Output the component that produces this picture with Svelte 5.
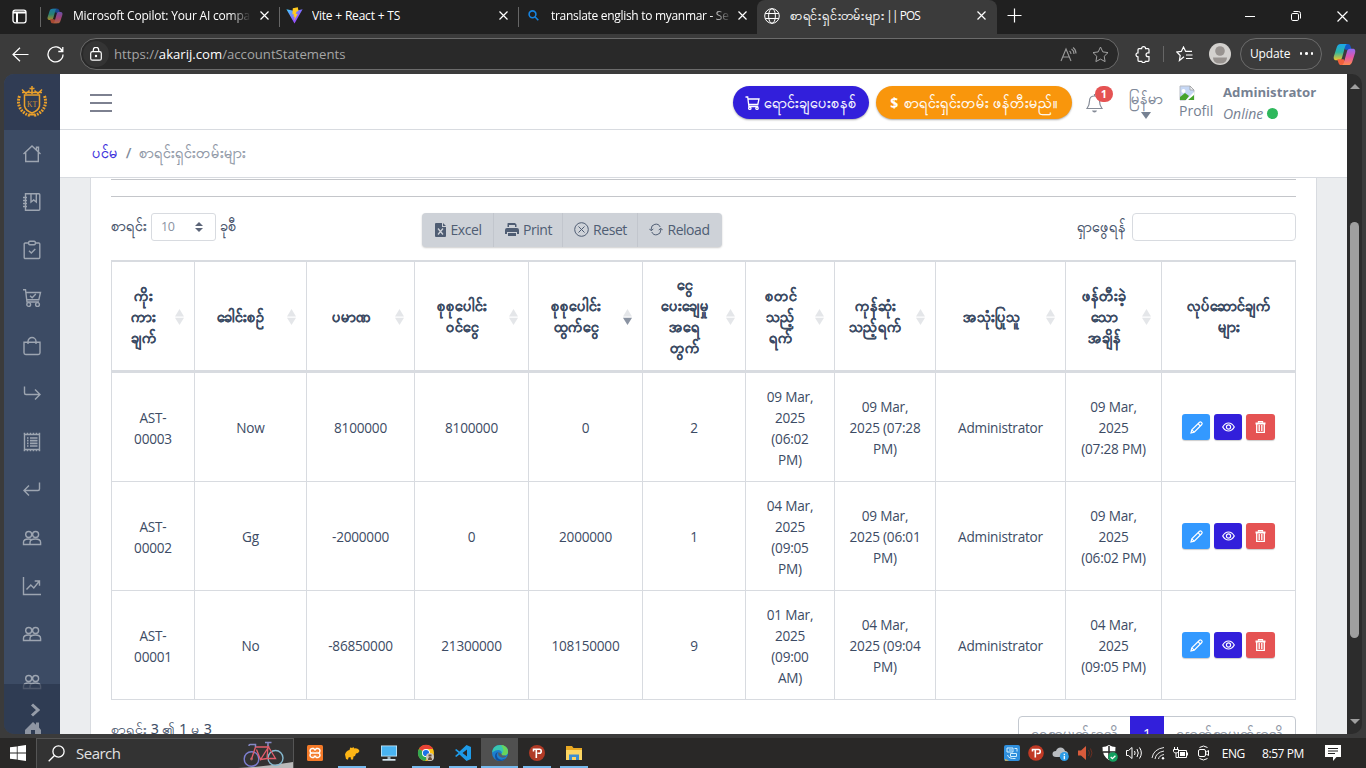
<script>
  const tabs = [
    { title: 'Microsoft Copilot: Your AI compa', icon: 'copilot', fade: true, w: 239 },
    { title: 'Vite + React + TS', icon: 'vite', w: 239 },
    { title: 'translate english to myanmar - Se', icon: 'search', fade: true, w: 238 },
    { title: 'စာရင်းရှင်းတမ်းများ', suffix: ' || POS', icon: 'globe', active: true, w: 240 }
  ];
  const nav = ['home', 'book', 'clip', 'cart', 'bag', 'right', 'list', 'left', 'people', 'chart', 'people', 'people'];
  const heads = [
    ['ကိုး', 'ကား', 'ချက်'],
    ['ခေါင်းစဉ်'],
    ['ပမာဏ'],
    ['စုစုပေါင်း', 'ဝင်ငွေ'],
    ['စုစုပေါင်း', 'ထွက်ငွေ'],
    ['ငွေ', 'ပေးချေမှု', 'အရေ', 'တွက်'],
    ['စတင်', 'သည့်', 'ရက်'],
    ['ကုန်ဆုံး', 'သည့်ရက်'],
    ['အသုံးပြုသူ'],
    ['ဖန်တီးခဲ့', 'သော', 'အချိန်'],
    ['လုပ်ဆောင်ချက်', 'များ']
  ];
  const rows = [
    [['AST-', '00003'], ['Now'], ['8100000'], ['8100000'], ['0'], ['2'], ['09 Mar,', '2025', '(06:02', 'PM)'], ['09 Mar,', '2025 (07:28', 'PM)'], ['Administrator'], ['09 Mar,', '2025', '(07:28 PM)']],
    [['AST-', '00002'], ['Gg'], ['-2000000'], ['0'], ['2000000'], ['1'], ['04 Mar,', '2025', '(09:05', 'PM)'], ['09 Mar,', '2025 (06:01', 'PM)'], ['Administrator'], ['09 Mar,', '2025', '(06:02 PM)']],
    [['AST-', '00001'], ['No'], ['-86850000'], ['21300000'], ['108150000'], ['9'], ['01 Mar,', '2025', '(09:00', 'AM)'], ['04 Mar,', '2025 (09:04', 'PM)'], ['Administrator'], ['04 Mar,', '2025', '(09:05 PM)']]
  ];
  const apps = ['xampp', 'heidi', 'pc', 'chrome', 'code', 'edge', 'pos', 'files'];
</script>

{#snippet copilot(size)}
  <svg width={size} height={size} viewBox="0 0 24 24">
    <defs>
      <linearGradient id="ca" x1="0" y1="0" x2="0" y2="1"><stop offset="0" stop-color="#1aa7ee" /><stop offset=".5" stop-color="#2fb6a0" /><stop offset="1" stop-color="#f3c62b" /></linearGradient>
      <linearGradient id="cb" x1="0" y1="0" x2="0" y2="1"><stop offset="0" stop-color="#8f6bf2" /><stop offset=".5" stop-color="#e255a8" /><stop offset="1" stop-color="#ff8a4c" /></linearGradient>
    </defs>
    <path fill="#1458c8" d="M9 1h6.500c1.600 0 2.300.9 2.800 2.400L19.500 7H13z" />
    <path fill="url(#ca)" d="M8 1h7c-1.300.3-2 1.500-2.500 3.200L9.500 15c-.6 2-1.500 3-3.500 3H3.500C.8 18 .3 15.800 1 13.500L4 4.200C4.700 2 6 1 8 1z" />
    <path fill="#f0603c" d="M15 23H8.500c-1.600 0-2.300-.9-2.800-2.400L4.500 17H11z" />
    <path fill="url(#cb)" d="M16 23H9c1.300-.3 2-1.500 2.500-3.200L14.500 9c.6-2 1.500-3 3.500-3h2.500c2.700 0 3.200 2.200 2.500 4.500l-3 9.300c-.7 2.200-2 3.200-4 3.200z" />
  </svg>
{/snippet}

{#snippet icon(name)}
  <svg class="ic" width="20" height="20" viewBox="0 0 20 20" fill="none" stroke="currentColor" stroke-width="1.400">
    {#if name === 'home'}
      <path d="M1.500 10 10 2l8.500 8M3.700 8.500v9h12.600v-9M14.500 6V3.200h2V8" />
    {:else if name === 'book'}
      <path d="M3.500 1.700h13.300q1 0 1 1v14.600q0 1-1 1H3.500zM1 5.500h4M1 8.500h4M1 11.500h4M1 14.500h4M9 2v8l2.700-2 2.600 2V2" />
    {:else if name === 'clip'}
      <rect x="2.200" y="3" width="15.600" height="15.500" rx="1" /><rect x="6.700" y="1.300" width="6.600" height="3.400" rx="1" fill="#3c4b64" /><path d="m7 10.700 2.300 2.300 4-4" />
    {:else if name === 'cart'}
      <path d="M1 1.700h2.500L5 14h12M4 4.500h14.500l-1.700 7.300H5M8 7.700l2.200 2 3.600-3.600" /><circle cx="6.700" cy="16.500" r="1.900" /><circle cx="15.500" cy="16.500" r="1.900" />
    {:else if name === 'bag'}
      <path d="M2 6.200h16v10.600q0 1.700-1.700 1.700H3.700Q2 18.500 2 16.800zM6 8V5.500a4 4 0 0 1 8 0V8" />
    {:else if name === 'right'}
      <path d="M2.500 2.500V9q0 1.500 1.500 1.500h14M13 5.500l5 5-5 5" />
    {:else if name === 'left'}
      <path d="M17.500 2.500V9q0 1.500-1.500 1.500H2M7 5.500l-5 5 5 5" />
    {:else if name === 'list'}
      <path d="M2.500 2.500h15v15h-15z" /><path stroke-dasharray="1.500 1.500" d="M1.700 1.500h16.600M1.700 18.500h16.600" /><path d="M5 6h1.500M8 6h7.500M5 8.700h1.500M8 8.700h7.500M5 11.400h1.500M8 11.400h7.500M5 14h1.500M8 14h7.500" stroke-width="1.700" />
    {:else if name === 'people'}
      <circle cx="6.700" cy="6.500" r="3" /><circle cx="13.600" cy="6.500" r="3" /><path d="M9.700 16.500H1.500v-2.200q0-3.300 5-3.300 2 0 3.200.6M8 16.500v-2q0-3.500 5.300-3.500t5.300 3.500v2z" />
    {:else if name === 'chart'}
      <path d="M1.500 1v17.500H19M4.500 13.500l4.300-4.600 3 3L17 5.500M12.700 5h4.800v4.800" />
    {/if}
  </svg>
{/snippet}

<div class="screen">
  <div class="tabs">
    <div class="workspace">
      <svg width="15" height="15" viewBox="0 0 15 15" fill="none" stroke="#fff" stroke-width="1.300"><rect x="1" y="1.200" width="13" height="12.600" rx="2.200" /><path d="M1 3.400h13M5 4v9.500" stroke-width="2" /></svg>
      <i class="sep"></i>
    </div>
    {#each tabs as t, i}
      <div class="tab {t.icon}" class:active={t.active} style="width:{t.w}px">
        <span class="fav">
          {#if t.icon === 'copilot'}<span class="dim">{@render copilot(16)}</span>
          {:else if t.icon === 'vite'}
            <svg width="17" height="17" viewBox="0 0 17 17"><defs><linearGradient id="vt" x1="0" y1="0" x2="1" y2="1"><stop offset="0" stop-color="#41d1ff" /><stop offset=".6" stop-color="#8b5cff" /><stop offset="1" stop-color="#bd34fe" /></linearGradient></defs><path d="M.4 2.300 8.500 16.500 16.600 2.300 8.800 4z" fill="url(#vt)" /><path d="m11.800.3-5 1-.4 6.200 1.600-.3-.6 2.800 1.400-.4-.7 4 3.700-6.800-2 .3.800-2.700 1.900-.3z" fill="#ffc91f" /></svg>
          {:else if t.icon === 'search'}
            <svg width="11" height="11" viewBox="0 0 11 11" fill="none" stroke="#1683e0" stroke-width="1.600"><circle cx="4.500" cy="4.300" r="3.400" /><path d="m7 6.800 3.300 3.400" /></svg>
          {:else}
            <svg width="16" height="16" viewBox="0 0 16 16" fill="none" stroke="#fff"><circle cx="8" cy="8" r="7.300" /><ellipse cx="8" cy="8" rx="3.400" ry="7.300" /><path d="M1.200 5.500h13.600M1.200 10.500h13.600" /></svg>
          {/if}
        </span>
        <span class="title" class:fade={t.fade}>{t.title}{#if t.suffix}<span class="suffix">{t.suffix}</span>{/if}</span>
        <svg class="x" width="9" height="9" viewBox="0 0 9 9" stroke="#fff" stroke-width="1.200"><path d="m.5.5 8 8m0-8-8 8" /></svg>
        {#if i < 2}<i class="sep"></i>{/if}
      </div>
    {/each}
    <svg class="plus" width="15" height="15" viewBox="0 0 15 15" stroke="#fff" stroke-width="1.200"><path d="M7.500.5v14M.5 7.500h14" /></svg>
    <div class="win">
      <svg width="10" height="10" viewBox="0 0 10 10" stroke="#fff"><path d="M0 5.500h10" /></svg>
      <svg width="10" height="10" viewBox="0 0 10 10" fill="none" stroke="#fff"><rect x=".5" y="2.500" width="7" height="7" rx="1.300" /><path d="M2.500.5h5q2 0 2 2v5" /></svg>
      <svg width="11" height="11" viewBox="0 0 11 11" stroke="#fff" stroke-width="1.200"><path d="m.5.5 10 10m0-10-10 10" /></svg>
    </div>
  </div>

  <div class="toolbar">
    <svg class="back" width="17" height="15" viewBox="0 0 17 15" fill="none" stroke="#fff" stroke-width="1.200"><path d="M16.500 7.500H1M8 .7 1 7.500l7 6.800" /></svg>
    <svg class="reload" width="17" height="17" viewBox="0 0 17 17" fill="none" stroke="#fff" stroke-width="1.300"><path d="M15.300 5.200A7.500 7.500 0 1 0 16 8.500M15.800 1v4.500h-4.500" /></svg>
    <div class="address">
      <span class="lock"><svg width="12" height="14" viewBox="0 0 12 14" fill="none" stroke="#fff" stroke-width="1.200"><rect x=".7" y="4.700" width="10.600" height="8.500" rx="1.800" /><path d="M3.300 4.500V3a2.700 2.700 0 0 1 5.400 0v1.500" /><circle cx="6" cy="9" r=".6" fill="#fff" /></svg></span>
      <span class="url">https://<b>akarij.com</b>/accountStatements</span>
      <svg class="aloud" width="17" height="15" viewBox="0 0 17 15" fill="none" stroke="#9a9a9a" stroke-width="1.100"><path d="M1 14 6 2l5 12M2.700 10h6.500M9.500 4q1.500 1 1.500 3M11.500 2q2.500 1.600 2.500 5M13 .5q3 2 3 6" /></svg>
      <svg width="17" height="17" viewBox="0 0 17 17" fill="none" stroke="#a2a2a2" stroke-linejoin="round"><path d="m8.500 1 2.300 4.900 5.200.7-3.800 3.700.9 5.300-4.600-2.500-4.600 2.500.9-5.300L1 6.600l5.200-.7z" /></svg>
    </div>
    <svg class="puz" width="16" height="17" viewBox="0 0 16 17" fill="none" stroke="#fff" stroke-width="1.200"><path d="M4 2.700h2.600a2 2 0 0 1 4 0H13q1 0 1 1v3.100h-1a1.900 1.900 0 0 0 0 3.900h1v3.600q0 1-1 1h-2.700a1.800 1.800 0 0 1-3.500 0H4q-1 0-1-1v-3.500a2 2 0 0 1 0-4V3.700q0-1 1-1z" /></svg>
    <i class="tsep"></i>
    <svg class="favs" width="17" height="16" viewBox="0 0 17 16" fill="none" stroke="#fff" stroke-width="1.200"><path d="M8 10.800 3.400 14.500l.8-5L.8 6l4.500-.6L7.500 1l2.200 4.400H16M10 9h6.500M10 12.500h6.500" /></svg>
    <svg class="ava" width="22" height="22" viewBox="0 0 22 22"><circle cx="11" cy="11" r="11" fill="#d3d1ce" /><circle cx="11" cy="8" r="4.800" fill="#989390" /><path d="M4 14.500h14q0 6-7 6t-7-6z" fill="#989390" /></svg>
    <div class="update">Update <span class="dots"><i></i><i></i><i></i></span></div>
    <span class="cop">{@render copilot(23)}</span>
  </div>

  <div class="frame">
    <aside>
      <div class="brand">
        <svg width="30" height="33" viewBox="0 0 30 33" fill="none" stroke="#e9a02b">
          <path d="M7.500 10h15v11q-1 4.500-7.500 7-6.500-2.500-7.500-7z" stroke-width="1.500" />
          <path d="M5 7.500h20M5 4.500l4 4 3.500-3M25 4.500l-4 4-3.500-3M15 1v8M12.500 3.500h5" stroke-width="1.500" />
          <path d="M2.500 11C-.5 19 3 28 14 31M27.500 11c3 8-.5 17-11.500 20" stroke-width="3" stroke-dasharray="1.800 1.100" />
          <path d="M12 29.500h6" stroke-width="2" />
          <text x="15" y="21.500" text-anchor="middle" fill="#d09235" stroke="none">KT</text>
        </svg>
      </div>
      <nav>{#each nav as n}<span>{@render icon(n)}</span>{/each}</nav>
      <div class="minimizer">
        <svg width="12" height="14" viewBox="0 0 12 14" fill="none" stroke="#959ca8" stroke-width="3"><path d="m2 1.500 6 5.500-6 5.500" /></svg>
        <svg class="hs" width="18" height="13" viewBox="0 0 18 13" fill="#8e95a2"><path d="M1 9 9 1l3 2.800V1.500h3v5L17 9v4h-6V9H7v4H1z" /></svg>
      </div>
    </aside>

    <main>
      <header>
        <div class="burger"><i></i><i></i><i></i></div>
        <div class="pill blue">
          <svg width="15" height="14" viewBox="0 0 15 14" fill="none" stroke="#fff" stroke-width="1.300"><path d="M.5 1h2.200l1.200 9.500h9.300M3.200 3h10.800l-1.200 5.500H3.700" /><circle cx="4.800" cy="12.200" r="1.200" /><circle cx="12" cy="12.200" r="1.200" /></svg>
          <span class="mm">ရောင်းချပေးစနစ်</span>
        </div>
        <div class="pill orange"><b>$</b><span class="mm">စာရင်းရှင်းတမ်း ဖန်တီးမည်။</span></div>
        <div class="bell">
          <svg width="17" height="20" viewBox="0 0 17 20" fill="none" stroke="#858b97" stroke-width="1.200"><path d="M1 15.500h15q-2.500-3.500-2.500-7.500 0-5-5-5t-5 5q0 4-2.500 7.500zM8.500 3V1" /><path d="M6 17.500h5q-.5 2-2.500 2t-2.500-2z" fill="#858b97" stroke="none" /></svg>
          <em>1</em>
        </div>
        <div class="lang"><span class="mm">မြန်မာ</span><i></i></div>
        <div class="photo">
          <svg width="16" height="16" viewBox="0 0 16 16"><path d="M1 1h10l4 4v10H1z" fill="#c5d7f5" stroke="#b8bcc4" /><path d="M11 1v4h4z" fill="#eef0f4" stroke="#999" stroke-width=".7" /><path d="M1 15v-3l5-4 4 3-3 4z" fill="#45a42c" /><path d="m6 16 9.500-9.500V16z" fill="#fff" /><path d="M9 15h6v-5z" fill="#45a42c" /><circle cx="4.500" cy="6" r="2" fill="#fff" /></svg>
          <span>Profil</span>
        </div>
        <div class="who"><strong>Administrator</strong><span>Online <i></i></span></div>
      </header>
      <div class="crumb mm"><a>ပင်မ</a><span>/</span><span class="cur">စာရင်းရှင်းတမ်းများ</span></div>
      <section>
        <div class="card">
          <hr /><hr class="second" />
          <div class="controls">
            <div class="len"><span class="lab1 mm">စာရင်း</span>
              <span class="select">10<svg width="8" height="10" viewBox="0 0 8 10" fill="#5c6578"><path d="M0 4h8L4 0zM0 6h8l-4 4z" /></svg></span>
              <span class="lab2 mm">ခုစီ</span></div>
            <div class="group">
              <span style="width:72px"><svg width="12" height="14" viewBox="0 0 12 14"><path d="M1 0h6v4h4v9q0 1-1 1H1q-1 0-1-1V1q0-1 1-1zM8 0l3 3H8z" fill="#4f5d73" /><path d="m3 5.500 5 6m0-6-5 6" stroke="#ced2d8" stroke-width="1.300" /></svg>Excel</span>
              <span style="width:69px"><svg width="14" height="13" viewBox="0 0 14 13" fill="#4f5d73"><path d="M3 0h7l1.500 1.500V4H10V2H4v2H2.500V.5zM2 5h10q2 0 2 2v4h-2V9H2v2H0V7q0-2 2-2zM3 10h8v3H3z" /></svg>Print</span>
              <span style="width:75px"><svg width="15" height="15" viewBox="0 0 15 15" fill="none" stroke="#4f5d73"><circle cx="7.500" cy="7.500" r="6.800" /><path d="m4.500 4.500 6 6m0-6-6 6" /></svg>Reset</span>
              <span style="width:84px"><svg width="14" height="13" viewBox="0 0 14 13" fill="none" stroke="#4f5d73"><path d="M2.200 7.500V6a4.700 4.700 0 0 1 9-2M11.800 5.500V7a4.700 4.700 0 0 1-9 2M.3 5.800l2 2 2-2M13.700 7.200l-2-2-2 2" /></svg>Reload</span>
            </div>
            <div class="find"><span class="mm">ရှာဖွေရန်</span><i></i></div>
          </div>
          <div class="table">
            <div class="row head">
              {#each heads as h, i}
                <div class="th" class:last={i === 10}>
                  <div>{#each h as l}<p>{l}</p>{/each}</div>
                  {#if i < 10}<svg class="sort" class:desc={i === 4} width="9" height="16" viewBox="0 0 9 16"><path d="M0 7.500h9L4.500 0z" /><path class="dn" d="M0 8.700h9L4.500 16z" /></svg>{/if}
                </div>
              {/each}
            </div>
            {#each rows as r}
              <div class="row">
                {#each r as c}<div class="td"><div>{#each c as l}<p>{l}</p>{/each}</div></div>{/each}
                <div class="td acts">
                  <span class="edit"><svg width="13" height="13" viewBox="0 0 13 13" fill="none" stroke="#fff" stroke-width="1.200"><path d="m1 12 .8-3.200L9.500 1.200q.9-.7 1.700 0l.6.600q.7.800 0 1.700L4.200 11.200zM8 2.700l2.300 2.300M1.800 8.800l2.400 2.400" /></svg></span>
                  <span class="view"><svg width="13" height="10" viewBox="0 0 13 10" fill="none" stroke="#fff" stroke-width="1.200"><path d="M.7 5q2.300-4 5.800-4t5.800 4q-2.300 4-5.800 4T.7 5z" /><circle cx="6.500" cy="5" r="2.100" /></svg></span>
                  <span class="del"><svg width="11" height="12" viewBox="0 0 11 12" fill="none" stroke="#fff" stroke-width="1.300"><path d="M3.500 1.800V.7h4v1.100M1.700 3v8.300h7.600V3M4.200 4v6M6.800 4v6" /><path d="M.5 2.500h10" stroke-width="2" /></svg></span>
                </div>
              </div>
            {/each}
          </div>
          <div class="foot">
            <span class="info">စာရင်း 3 ၏ 1 မှ 3</span>
            <div class="pager"><span class="prev mm">ရှေ့စာမျက်နှာသို့</span><b>1</b><span class="next mm">နောက်စာမျက်နှာသို့</span></div>
          </div>
        </div>
      </section>
    </main>
    <div class="scroll"><i class="up"></i><i class="thumb"></i><i class="down"></i></div>
  </div>

  <div class="taskbar">
    <div class="start"><svg width="16" height="16" viewBox="0 0 16 16" fill="#fff"><path d="M0 2.300 6.800 1.400v6.200H0zM7.600 1.200 16 0v7.600H7.600zM0 8.400h6.800v6.200L0 13.700zM7.600 8.400H16V16l-8.400-1.200z" /></svg></div>
    <div class="search">
      <svg width="17" height="17" viewBox="0 0 17 17" fill="none" stroke="#fff" stroke-width="1.300"><circle cx="10.500" cy="6.500" r="5.600" /><path d="M6.500 10.500.7 16.300" /></svg>
      <span>Search</span>
      <svg class="bike" width="60" height="28" viewBox="0 0 60 28" fill="none"><path d="M5 28Q30 27 60 22v6z" fill="#b9b9b9" /><circle cx="18.500" cy="19" r="7.300" stroke="#7d7fd0" stroke-width="1.400" /><circle cx="42.500" cy="18" r="7.500" stroke="#86b9cf" stroke-width="1.400" /><circle cx="18.500" cy="19" r="1.400" fill="#a66" /><path d="m18.500 19 4-12h13l-8 12.500-4-10M27.500 19.500l6.500-1h8.500L35 6l-1 12.500" stroke="#e35d6c" stroke-width="1.300" /><path d="M16 6q0-2 2-1.500h4.500V7M32 2.500h6.500M35 2.500V6" stroke="#8589c5" stroke-width="1.500" /></svg>
    </div>
    <div class="apps">
      {#each apps as a}
        <span class:on={a !== 'xampp' && a !== 'pc'} class:cur={a === 'edge'}>
          <svg width="18" height="18" viewBox="0 0 18 18">
            {#if a === 'xampp'}<rect x="1" y="1" width="16" height="16" rx="1.500" fill="#f47a28" /><path d="M6 4.500h1.500L9 6l1.500-1.500H12q2 .3 2 2.200Q14 8.500 12.500 9q1.500.5 1.500 2.300 0 1.900-2 2.200h-1.500L9 12l-1.500 1.500H6q-2-.3-2-2.200Q4 9.500 5.500 9 4 8.500 4 6.700q0-1.900 2-2.200zM6.500 9h5M7 7v.2M11 7v.2M7 11v.2M11 11v.2" fill="none" stroke="#fff" stroke-width="1.500" />
            {:else if a === 'heidi'}<path d="M2 10.500Q3 6.500 6.500 6l.7-2.500 2 .5 1-1 1.300 1.500q4-.7 5 2.500l-1.500 2-2 .5-1 2.500-1.500.5-.5 3h-2L7.500 13l-2 .5-.5 2.300-2-.8z" fill="#fdb515" />
            {:else if a === 'pc'}<rect x="1" y="1.500" width="16" height="11" fill="#c9e9fb" /><rect x="1.800" y="2.300" width="14.400" height="9.400" fill="#49b4f2" /><path d="M7.500 12.500h3V15h-3z" fill="#9fb4c0" /><path d="M2.500 15h13v1.700h-13z" fill="#d4e6f0" />
            {:else if a === 'chrome'}<circle cx="9" cy="9" r="8" fill="#fbc116" /><path d="M9 9 2 5A8 8 0 0 1 16 5H9z" fill="#e94235" /><path d="M9 9 2 5a8 8 0 0 0 6 12l4-6z" fill="#32a852" /><circle cx="9" cy="9" r="4" fill="#fff" /><circle cx="9" cy="9" r="3.100" fill="#1a73e8" /><circle cx="13" cy="13" r="4" fill="#cfc8bd" /><path d="M11 16q0-3 2-3t2 3zM11.500 10.500h3v2h-3z" fill="#674b37" />
            {:else if a === 'code'}<path d="m12.500 1 4.500 2v12l-4.500 2-7-6.500L2.300 13 1 12l3.500-3L1 6l1.300-1 3.200 2.500zM13 5.500 8.500 9l4.500 3.500z" fill="#1e9be8" fill-rule="evenodd" />
            {:else if a === 'edge'}<circle cx="9" cy="9" r="8" fill="#1c7fd0" /><path d="M1 8.500Q2 1 9 1q7.500 0 8 6.500 0 4-4.500 4-2.500 0-2-1.500 1-1.500-.5-3Q7 4.500 1 8.500z" fill="#38c6b0" /><path d="M10 1q6.500.5 7 6.500 0 4-4.500 4-2.500 0-2-1.500 4-3-.5-9z" fill="#69d45b" /><path d="M7 8q-3 4 1 7 3 2 7-1-2 3-6 3-5 0-5-5 0-3 3-4z" fill="#124f9e" /><path d="M7.500 8q-1.500 4 3 5.500 3 .5 5-1l-2-1q-3 .3-3-1.500z" fill="#55606a" />
            {:else if a === 'pos'}<circle cx="9" cy="9" r="8" fill="#b03a26" /><path d="M5.500 7.500V5.300h6q1.700 0 1.700 2t-1.700 2H9.500M8.300 5v9" stroke="#fff" stroke-width="1.600" fill="none" />
            {:else}<path d="M1 2h6l1.500 2H17v12H1z" fill="#e9a923" /><path d="M1 6h16v10H1z" fill="#fcd663" /><path d="M4 16v-5.500h10V16h-3v-3H7v3z" fill="#3c8ed0" />{/if}
          </svg>
        </span>
      {/each}
    </div>
    <div class="tray">
      <svg width="16" height="16" viewBox="0 0 16 16"><rect width="16" height="16" rx="2" fill="#2f8fdd" /><path d="M3 3h6v4H3zM6.500 8.500h6v3h-6zM3.500 10q1 4 8 3.500M10.500 3.500h2.500v3M5 5h3" fill="none" stroke="#d2efff" /><path d="M1 14 5 15.500l-4 .3z" fill="#f0b53a" /></svg>
      <svg width="16" height="16" viewBox="0 0 16 16"><circle cx="8" cy="8" r="7.800" fill="#c13a25" /><path d="M4.500 6.500V4.500h6q1.700 0 1.700 2t-1.700 2H8.700M7.300 4v8.500" stroke="#fff" stroke-width="1.600" fill="none" /></svg>
      <svg width="17" height="16" viewBox="0 0 17 16"><path d="M4 12q-3.500 0-3.500-3T4 6q1-3.500 4.500-3.500T13 6q3 .3 3 3t-3 3z" fill="#b9bcc0" /><circle cx="12.300" cy="11.500" r="4.500" fill="#2c9be6" /><path d="M12.300 10.700v3.500M12.300 8.700v1.200" stroke="#fff" stroke-width="1.300" /></svg>
      <svg width="16" height="16" viewBox="0 0 16 16"><path d="M1 5.500h3L9 1v14l-5-4.500H1z" fill="#d95b3b" /><path d="M11.500 5q2 3 0 6M13.500 3.500q3 4.500 0 9" fill="none" stroke="#6b2e21" /></svg>
      <svg width="17" height="17" viewBox="0 0 17 17"><path d="M8 0q3 2 6.500 2 .5 9-6.500 13Q1 11 1.500 2 5 2 8 0z" fill="#fff" /><path d="M8 1v13M2 7h12" stroke="#222" stroke-width="1.500" /><circle cx="12" cy="12" r="4.800" fill="#13a060" /><path d="m9.700 12 1.700 1.700 3-3" fill="none" stroke="#fff" stroke-width="1.300" /></svg>
      <svg width="17" height="14" viewBox="0 0 17 14" fill="none" stroke="#fff"><path d="M.5 4.500h2L6 1.500v11L2.500 9.500h-2zM8.500 5q1.200 2 0 4M11 3q2.500 4 0 8M13.500 1.500q3.700 5.500 0 11" /></svg>
      <svg width="14" height="14" viewBox="0 0 14 14" fill="none" stroke="#e5e5e5"><path d="M1 12Q2.500 3 13 1.500M4 13Q5 6.500 13 5M7.500 13Q8 9.500 13 8.500" /><circle cx="12" cy="12.300" r="1.200" fill="#fff" stroke="none" /></svg>
      <svg width="16" height="14" viewBox="0 0 16 14" fill="none" stroke="#fff"><path d="M5.500 4.500h8v7h-8zM14.500 6.500v3M.5 3.500h5v2q-.5 1.500-2.500 1.500T.5 5.500zM1.500 3.500V1M4.500 3.500V1M3 7v4.500h2.500" /><path d="M7 6h5v4H7z" fill="#fff" stroke="none" /></svg>
      <svg width="13" height="16" viewBox="0 0 13 16" fill="none" stroke="#fff"><rect x="1.500" y="4.500" width="7" height="7" rx="1.500" /><path d="m8.500 7.500 3-2v5l-3-2M2.500 2.500q4-3 8 0M2.500 13.500q4 3 8 0" /></svg>
      <span class="eng">ENG</span><span class="time">8:57 PM</span>
      <svg class="note" width="16" height="16" viewBox="0 0 16 16"><path d="M0 0h16v12h-4.500L8 16v-4H0z" fill="#fff" /><path d="M3 3.500h10M3 6h10M3 8.500h7" stroke="#222" /></svg>
    </div>
  </div>
</div>

<style>
  :global(body) { margin: 0; overflow: hidden; background: #3b3b3b; }
  .screen { width: 1366px; height: 768px; overflow: hidden; display: flex; flex-direction: column; font: 14px/21px "Open Sans", "Noto Sans", sans-serif; color: #3c4b64; background: #3b3b3b; }
  .screen * { box-sizing: border-box; }
  svg { display: block; flex: none; }
  p { margin: 0; white-space: nowrap; }
  .mm { font-size: 14.300px; -webkit-text-stroke: .25px currentColor; }
  .tabs { height: 34px; background: #202020; display: flex; flex: none; color: #fff; font-size: 12px; letter-spacing: -0.2px; }
  .workspace { width: 41px; padding: 9px 0 0 12px; position: relative; }
  .tab { display: flex; align-items: center; position: relative; padding: 0 9px 3px 6px; flex: none; }
  .tab.active { background: #3b3b3b; border-radius: 8px 8px 0 0; padding-left: 7px; }
  .active .title { font-size: 12.600px; letter-spacing: -.35px; -webkit-text-stroke: .2px #fff; }
  .active .suffix { font-size: 11.800px; letter-spacing: -.9px; -webkit-text-stroke: 0; white-space: pre; }
  .fav { width: 26px; display: flex; flex: none; }
  .tab.search { padding: 0 8px 3px 8px; }
  .tab.search .fav { width: 24px; padding-left: 1px; }
  .tab.search .title { letter-spacing: -.3px; }
  .tab.search .x { margin-left: 6px; }
  .dim { opacity: .65; }
  .title { flex: 1; white-space: nowrap; overflow: hidden; line-height: 24px; }
  .fade { mask-image: linear-gradient(90deg, #000 88%, transparent); }
  .x { margin: 0 2px 0 9px; }
  .sep { position: absolute; right: 0; top: 7px; width: 1px; height: 20px; background: #666; }
  .plus { margin: 8px 0 0 10px; }
  .win { margin-left: auto; display: flex; align-items: center; gap: 36px; padding: 0 18px 2px 0; }
  .toolbar { height: 40px; flex: none; display: flex; align-items: center; padding-left: 12px; background: #3b3b3b; color: #fff; font-size: 12px; }
  .reload { margin-left: 18px; }
  .address { margin-left: 16px; width: 1039px; height: 32px; border: 1px solid #6b6b6b; border-radius: 16px; background: #292929; display: flex; align-items: center; padding-right: 9px; }
  .lock { width: 26px; height: 26px; border-radius: 50%; background: #343434; display: grid; place-items: center; margin-left: 2px; }
  .url { margin-left: 5px; flex: 1; font-size: 13.150px; color: #a5a5a5; }
  .url b { font-weight: 400; color: #fff; }
  .aloud { margin-right: 15px; }
  .puz { margin-left: 16px; }
  .tsep { width: 1px; height: 16px; background: #666; margin: 0 12px; }
  .ava { margin-left: 16px; }
  .update { width: 82px; height: 32px; border: 1px solid #6b6b6b; border-radius: 16px; margin-left: 9px; display: flex; align-items: center; padding: 0 8px 1px 9px; justify-content: space-between; letter-spacing: -.15px; }
  .dots { display: flex; gap: 3px; }
  .dots i { width: 2.500px; height: 2.500px; background: #fff; border-radius: 50%; }
  .cop { margin-left: 11px; }
  .frame { height: 660px; margin: 0 4px; display: flex; border-radius: 10px; overflow: hidden; flex: none; }
  aside { width: 56px; background: #3c4b64; display: flex; flex-direction: column; flex: none; }
  .brand { height: 56px; background: #303c54; padding: 11px 0 0 13px; flex: none; }
  .brand text { font: 7.500px "Liberation Serif", serif; }
  nav { height: 554px; flex: none; color: #9da5b1; }
  nav span { height: 48px; display: grid; place-items: center; }
  .minimizer { height: 50px; flex: none; background: #2a354bb0; padding: 19px 0 0 26px; position: relative; }
  .hs { margin: 4px 0 0 -6px; }
  main { width: 1287px; background: #ebedef; display: flex; flex-direction: column; }
  header { height: 56px; background: #fff; border-bottom: 1px solid #d8dbe0; display: flex; flex: none; color: #768192; }
  .burger { width: 22px; margin: 20px 621px 0 30px; display: flex; flex-direction: column; gap: 6px; }
  .burger i { height: 2px; background: #7d8190; }
  .pill { height: 33px; margin-top: 12px; border-radius: 17px; color: #fff; display: flex; align-items: center; justify-content: center; box-shadow: 0 1px 2px #0005; white-space: nowrap; line-height: 32px; }
  .blue { width: 136px; background: #321fdb; gap: 4px; }
  .orange { width: 196px; background: #f9960c; margin-left: 7px; gap: 6px; }
  .bell { width: 28px; margin: 19px 0 0 14px; position: relative; }
  .bell em { position: absolute; left: 9px; top: -7px; width: 18px; height: 16px; border-radius: 8px; background: #e55353; color: #fff; font: bold 11px/16px "Open Sans"; text-align: center; }
  .lang { width: 35px; margin: 14px 0 0 14px; text-align: center; white-space: nowrap; display: flex; flex-direction: column; align-items: center; }
  .lang i { border: 5.500px solid transparent; border-top: 7px solid #768192; margin-top: 3px; border-bottom: 0; }
  .photo { width: 34px; margin: 11px 0 0 16px; height: 32px; overflow: hidden; }
  .photo span { display: block; margin-top: -1px; }
  .who { margin: 8px 0 0 10px; display: flex; flex-direction: column; line-height: 21px; white-space: nowrap; }
  .who strong { font-size: 13.200px; }
  .who span { font-style: italic; display: flex; align-items: center; gap: 4px; }
  .who i { width: 11px; height: 11px; background: #2eb85c; border-radius: 50%; }
  .crumb { height: 48px; background: #fff; border-bottom: 1px solid #d8dbe0; flex: none; display: flex; gap: 8px; align-items: center; padding: 0 0 2px 32px; color: #768192; }
  .crumb a { color: #321fdb; }
  .crumb .cur { color: #8a93a2; }
  section { flex: 1; padding: 0 30px; overflow: hidden; }
  .card { height: 556px; background: #fff; border: solid #d8dbe0; border-width: 0 1px; padding: 1px 20px 0; }
  hr { border: 0; height: 1px; background: #c4c6ca; margin: 0; }
  .second { margin: 16px 0; }
  .controls { display: flex; height: 47px; justify-content: space-between; }
  .len { display: flex; align-items: flex-start; line-height: 26px; white-space: nowrap; width: 311px; }
  .lab1 { width: 40px; }
  .select { width: 65px; height: 28px; border: 1px solid #d8dbe0; border-radius: 3px; padding: 0 12px 0 9px; display: flex; align-items: center; justify-content: space-between; font-size: 12.500px; letter-spacing: -.4px; color: #8a93a2; }
  .lab2 { margin-left: 4px; }
  .group { display: flex; height: 34px; background: #ced2d8; border-radius: 4px; box-shadow: 0 1px 2px #0003; color: #4f5d73; margin-right: auto; }
  .group span { display: flex; align-items: center; justify-content: center; gap: 4px; border-right: 1px solid #c2c6cd; letter-spacing: -.45px; padding: 0 0 1px 1px; }
  .group span:last-child { border: 0; padding-right: 2px; }
  .find { display: flex; gap: 6px; line-height: 27px; }
  .find i { width: 164px; height: 28px; border: 1px solid #d8dbe0; border-radius: 4px; }
  .table { border-right: 1px solid #d8dbe0; }
  .row { display: grid; grid-template-columns: 83px 112px 108px 114px 114px 103px 89px 101px 130px 96px 134px; height: 109px; border-bottom: 1px solid #d8dbe0; }
  .head { height: 113px; border-top: 2px solid #d8dbe0; border-bottom: 3px solid #d8dbe0; font-weight: 700; }
  .th, .td { border-left: 1px solid #d8dbe0; display: flex; align-items: center; justify-content: center; text-align: center; }
  .td { font-size: 13.600px; letter-spacing: -.22px; padding-top: 1px; }
  .th { padding-right: 19px; position: relative; font-size: 14.300px; -webkit-text-stroke: .2px currentColor; }
  .th.last { padding: 0; }
  .sort { position: absolute; right: 10px; top: 47px; fill: #e4e6e9; }
  .desc .dn { fill: #8a93a2; }
  .acts { gap: 4px; }
  .acts span { width: 28px; height: 26px; border-radius: 3px; display: grid; place-items: center; box-shadow: 0 1px 1px #0003; margin-top: -1px; }
  .edit { background: #39f; }
  .view { background: #321fdb; }
  .acts .del { width: 29px; background: #e55353; }
  .foot { display: flex; justify-content: space-between; padding-top: 16px; white-space: nowrap; }
  .info { padding-top: 2px; font-size: 14.200px; -webkit-text-stroke: .1px currentColor; }
  .pager { display: flex; width: 278px; height: 35px; border: 1px solid #c4c9d0; border-radius: 4px; color: #8a93a2; line-height: 33px; text-align: center; }
  .prev { width: 111px; }
  .next { flex: 1; }
  .pager b { width: 34px; background: #321fdb; color: #fff; font-weight: 400; margin-top: -1px; padding-top: 1px; }
  .scroll { width: 15px; background: #2c2c2c; display: flex; flex-direction: column; align-items: center; }
  .up { border: 5px solid transparent; border-bottom: 5px solid #9f9f9f; border-top: 0; margin-top: 10px; }
  .thumb { width: 9px; height: 416px; border-radius: 5px; background: #9f9f9f; margin-top: 133px; }
  .down { border: 5px solid transparent; border-top: 5px solid #9f9f9f; border-bottom: 0; margin-top: 81px; }
  .taskbar { margin-top: 4px; height: 30px; background: #292827; display: flex; color: #fff; flex: none; }
  .start { width: 36px; padding: 7px 0 0 10px; }
  .taskbar .search { width: 258px; border: 1px solid #555; border-bottom: 0; background: #333; display: flex; align-items: center; padding-left: 11px; }
  .taskbar .search span { margin-left: 11px; flex: 1; color: #e2e2e2; font-size: 15px; letter-spacing: -.5px; }
  .apps { display: flex; margin-left: 2px; }
  .apps span { width: 37px; display: flex; justify-content: center; padding-top: 6px; position: relative; }
  .apps .on::after { content: ""; position: absolute; left: 5px; right: 4px; bottom: 0; height: 2px; background: #76b9ed; }
  .apps .cur { background: #505050; }
  .apps .cur::after { left: 0; right: 0; }
  .tray { margin-left: auto; display: flex; align-items: center; gap: 8px; padding-right: 25px; font-size: 12px; letter-spacing: -.4px; }
  .eng { margin-left: 4px; }
  .time { margin-left: 9px; }
  .note { margin-left: 13px; }
</style>
